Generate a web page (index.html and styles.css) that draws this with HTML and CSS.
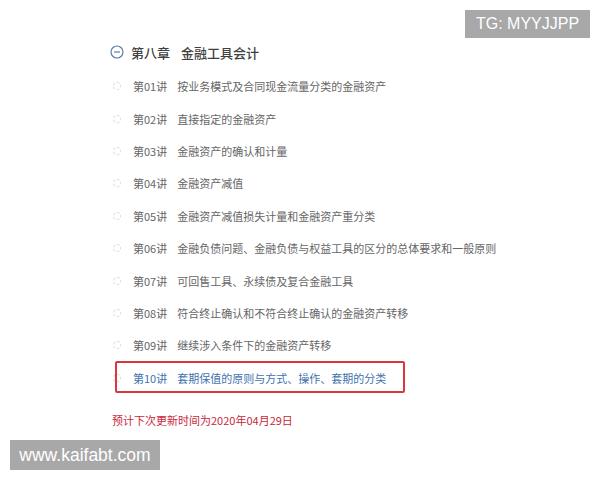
FILE: index.html
```html
<!DOCTYPE html>
<html lang="zh">
<head>
<meta charset="utf-8">
<link rel="stylesheet" href="styles.css">
</head>
<body>
<div class="page">
  <div class="chapter">
    <svg class="chap-icon" width="14" height="14" viewBox="0 0 14 14"><circle cx="7" cy="7" r="6" fill="none" stroke="#5b7fa6" stroke-width="1.2"/><line x1="4" y1="7" x2="10" y2="7" stroke="#5b7fa6" stroke-width="1.2"/></svg>
    <span class="chap-no">第八章</span><span class="chap-title">金融工具会计</span>
  </div>
  <ul class="lessons">
    <li class="lesson"><span class="dot"></span><span class="no">第01讲</span><span class="title">按业务模式及合同现金流量分类的金融资产</span></li>
    <li class="lesson"><span class="dot"></span><span class="no">第02讲</span><span class="title">直接指定的金融资产</span></li>
    <li class="lesson"><span class="dot"></span><span class="no">第03讲</span><span class="title">金融资产的确认和计量</span></li>
    <li class="lesson"><span class="dot"></span><span class="no">第04讲</span><span class="title">金融资产减值</span></li>
    <li class="lesson"><span class="dot"></span><span class="no">第05讲</span><span class="title">金融资产减值损失计量和金融资产重分类</span></li>
    <li class="lesson"><span class="dot"></span><span class="no">第06讲</span><span class="title">金融负债问题、金融负债与权益工具的区分的总体要求和一般原则</span></li>
    <li class="lesson"><span class="dot"></span><span class="no">第07讲</span><span class="title">可回售工具、永续债及复合金融工具</span></li>
    <li class="lesson"><span class="dot"></span><span class="no">第08讲</span><span class="title">符合终止确认和不符合终止确认的金融资产转移</span></li>
    <li class="lesson"><span class="dot"></span><span class="no">第09讲</span><span class="title">继续涉入条件下的金融资产转移</span></li>
    <li class="lesson active"><span class="dot"></span><span class="no">第10讲</span><span class="title">套期保值的原则与方式、操作、套期的分类</span></li>
  </ul>
  <p class="update">预计下次更新时间为2020年04月29日</p>
</div>
<div class="wm wm-top">TG: MYYJJPP</div>
<div class="wm wm-bottom">www.kaifabt.com</div>
</body>
</html>
```
FILE: styles.css
```css
html, body {
  margin: 0;
  padding: 0;
  background: #fff;
}
body {
  width: 600px;
  height: 480px;
  position: relative;
  overflow: hidden;
  font-family: "Noto Sans CJK SC", "Noto Sans", sans-serif;
}
.page {
  padding: 40px 0 0 110px;
}
.chapter {
  display: flex;
  align-items: center;
  height: 24px;
  font-size: 13px;
  color: #404040;
  font-weight: 500;
}
.chap-icon {
  margin-right: 7px;
  flex: none;
}
.chap-title {
  margin-left: 11px;
}
.lessons {
  list-style: none;
  margin: 6px 0 0 0;
  padding: 0;
}
.lesson {
  display: flex;
  align-items: center;
  height: 32.4px;
  font-size: 11px;
  color: #666;
  position: relative;
}
.dot {
  width: 6px;
  height: 6px;
  border: 1px dashed #dedede;
  border-radius: 50%;
  margin: 0 12px 0 3px;
  flex: none;
}
.no {
  margin-right: 10px;
}
.lesson.active {
  color: #3f72ad;
}
.lesson.active::after {
  content: "";
  position: absolute;
  left: 5px;
  top: -1px;
  width: 286px;
  height: 28px;
  border: 2px solid #d8383d;
  border-radius: 2px;
}
.update {
  margin: 18px 0 0 2px;
  font-size: 11px;
  color: #c8283a;
}
.wm {
  position: absolute;
  background: #a8a8a8;
  color: #fff;
  font-family: "Liberation Sans", Arial, sans-serif;
  font-size: 16px;
  line-height: 28px;
  height: 28px;
}
.wm-top {
  top: 10px;
  left: 465px;
  width: 125px;
  text-align: center;
}
.wm-bottom {
  top: 440px;
  left: 10px;
  width: 150px;
  height: 30px;
  line-height: 30px;
  font-size: 17.5px;
  text-align: center;
}
```
